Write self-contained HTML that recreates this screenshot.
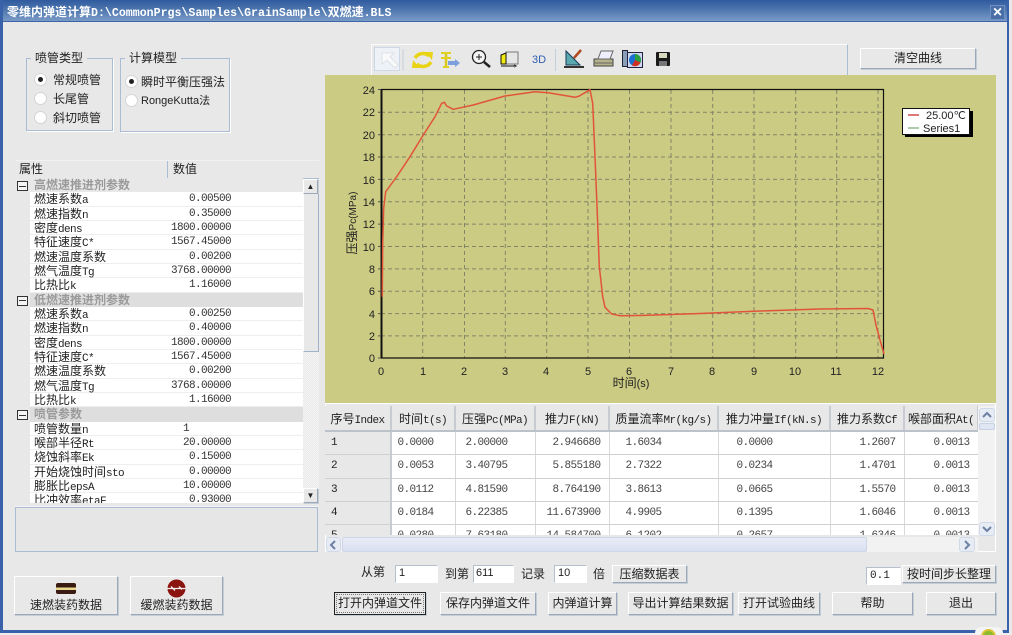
<!DOCTYPE html>
<html><head><meta charset="utf-8">
<style>
html,body{margin:0;padding:0;background:#fff}
#w{position:relative;width:1012px;height:635px;overflow:hidden;background:#e8e8e8;font:12px "Liberation Sans","Noto Sans CJK SC",sans-serif;color:#222;filter:blur(.3px)}
#w div,#w span.a{position:absolute;box-sizing:border-box}
b.m{font:normal 11px "Liberation Mono",monospace;letter-spacing:-.6px}
.t{white-space:nowrap;line-height:16px}
.btn{background:#e8e8e8;border:1px solid;border-color:#fff #9aa8ba #9aa8ba #fff;box-shadow:1px 1px 0 #c4ccd6;text-align:center;white-space:nowrap;color:#222}
.gb{border:1px solid #a9bcd3;box-shadow:1px 1px 0 #fff}
.leg{background:#e8e8e8;padding:0 4px;white-space:nowrap;line-height:14px}
.r{width:13px;height:13px;border-radius:50%;background:#fff;border:1px solid #d4d4d4}
.r.on:after{content:"";position:absolute;left:3px;top:3px;width:5px;height:5px;border-radius:50%;background:#222}
.in{background:#fff;border:1px solid;border-color:#b5c0cc #fff #fff #b5c0cc;font:11px/15px "Liberation Sans",sans-serif;padding-left:3px;color:#222}
#pg{left:15px;top:178px;width:288px;height:325px;overflow:hidden;background:#e8e8e8}
.g,.p{position:relative!important;height:14.33px;line-height:14px;white-space:nowrap}
.g{background:linear-gradient(#dedede,#dedede) 15px 0 no-repeat;color:#9a9a9a;font-weight:bold;padding-left:19px}
.g.f{background:none}
.g:before{content:"";position:absolute;left:2px;top:3px;width:9px;height:8px;border:1px solid #333;background:linear-gradient(#333,#333) center/7px 1px no-repeat #f4f4f4}
.p{margin-left:15px;background:#fff;border-bottom:1px solid #eee;padding-left:4px}
.p i{position:absolute;top:0;left:121px;width:80px;font:normal 11px/14px "Liberation Mono",monospace;letter-spacing:-.6px;text-align:right;color:#333}
#tb{left:325px;top:406px;width:653px;height:129px;overflow:hidden;background:#fff}
table{border-collapse:collapse;table-layout:fixed;width:653px;font:11px "Liberation Mono",monospace;letter-spacing:-.6px;color:#444}
th{height:24px;background:#e8e8e8;font-weight:normal;color:#222;border-right:2px solid #c8ccd2;border-bottom:2px solid #bcc2ca;white-space:nowrap;overflow:hidden;padding:0;text-align:center}
td{height:22.3px;padding:0;text-align:right;border-right:1px solid #d8d8d8;border-bottom:1px solid #d0d0d0}
th span{font:12px "Liberation Sans","Noto Sans CJK SC",sans-serif;letter-spacing:0}
td.h{background:#e8e8e8;text-align:left;padding-left:6px;border-right:2px solid #c8ccd2;color:#222}
</style></head><body><div id="w">

<!-- title bar -->
<div style="left:0;top:0;width:1012px;height:22px;background:linear-gradient(#2f5a9f,#4d76ae 45%,#7a9ac6);border-bottom:1px solid #3d66a8"></div>
<div class="t" style="left:7px;top:4px;color:#fff;font-weight:bold;font-size:12px">零维内弹道计算<b style="font:bold 11.6px 'Liberation Mono',monospace">D:\CommonPrgs\Samples\GrainSample\</b>双燃速<b style="font:bold 11.6px 'Liberation Mono',monospace">.BLS</b></div>
<div style="left:990px;top:5px;width:15px;height:15px;background:#4a6fa8;border:1px solid #6f90c0;color:#fff;font:bold 16px/13px 'Liberation Sans',sans-serif;text-align:center">×</div>
<!-- window frame -->
<div style="left:0;top:0;width:3px;height:633px;background:#3a62aa"></div>
<div style="left:1007px;top:0;width:2px;height:633px;background:#3a62aa"></div>
<div style="left:1009px;top:0;width:3px;height:635px;background:#e9e9e9"></div>
<div style="left:0;top:630px;width:1009px;height:3px;background:#3a62aa"></div>
<div style="left:0;top:633px;width:1012px;height:2px;background:#eee"></div>
<div style="left:975px;top:627px;width:28px;height:8px;background:#f4f4f4;border-radius:6px 6px 0 0"></div>
<div style="left:981px;top:629px;width:15px;height:15px;border-radius:50%;background:#8cbb2c;border:2px solid #d9c437"></div>

<!-- groups -->
<div class="gb" style="left:26px;top:58px;width:87px;height:73px"></div>
<div class="t leg" style="left:31px;top:51px">喷管类型</div>
<div class="r on" style="left:34px;top:73px"></div><div class="t" style="left:53px;top:72px">常规喷管</div>
<div class="r" style="left:34px;top:92px"></div><div class="t" style="left:53px;top:91px">长尾管</div>
<div class="r" style="left:34px;top:111px"></div><div class="t" style="left:53px;top:110px">斜切喷管</div>

<div class="gb" style="left:120px;top:58px;width:110px;height:74px"></div>
<div class="t leg" style="left:125px;top:51px">计算模型</div>
<div class="r on" style="left:125px;top:75px"></div><div class="t" style="left:141px;top:74px">瞬时平衡压强法</div>
<div class="r" style="left:125px;top:94px"></div><div class="t" style="left:141px;top:93px;font-size:11px">RongeKutta法</div>

<!-- property grid -->
<div style="left:15px;top:160px;width:304px;height:19px;background:#e8e8e8;border-top:1px solid #f2f2f2;border-bottom:1px solid #a9bcd3"></div>
<div style="left:167px;top:161px;width:1px;height:17px;background:#a9bcd3"></div>
<div class="t" style="left:19px;top:161px">属性</div>
<div class="t" style="left:173px;top:161px">数值</div>
<div id="pg">
<div class="g f">高燃速推进剂参数</div>
<div class="p">燃速系数<b class="m">a</b><i>0.00500</i></div>
<div class="p">燃速指数<b class="m">n</b><i>0.35000</i></div>
<div class="p">密度<b class="m">dens</b><i>1800.00000</i></div>
<div class="p">特征速度<b class="m">C*</b><i>1567.45000</i></div>
<div class="p">燃速温度系数<i>0.00200</i></div>
<div class="p">燃气温度<b class="m">Tg</b><i>3768.00000</i></div>
<div class="p">比热比<b class="m">k</b><i>1.16000</i></div>
<div class="g">低燃速推进剂参数</div>
<div class="p">燃速系数<b class="m">a</b><i>0.00250</i></div>
<div class="p">燃速指数<b class="m">n</b><i>0.40000</i></div>
<div class="p">密度<b class="m">dens</b><i>1800.00000</i></div>
<div class="p">特征速度<b class="m">C*</b><i>1567.45000</i></div>
<div class="p">燃速温度系数<i>0.00200</i></div>
<div class="p">燃气温度<b class="m">Tg</b><i>3768.00000</i></div>
<div class="p">比热比<b class="m">k</b><i>1.16000</i></div>
<div class="g">喷管参数</div>
<div class="p">喷管数量<b class="m">n</b><i style="text-align:left;left:153px">1</i></div>
<div class="p">喉部半径<b class="m">Rt</b><i>20.00000</i></div>
<div class="p">烧蚀斜率<b class="m">Ek</b><i>0.15000</i></div>
<div class="p">开始烧蚀时间<b class="m">sto</b><i>0.00000</i></div>
<div class="p">膨胀比<b class="m">epsA</b><i>10.00000</i></div>
<div class="p">比冲效率<b class="m">etaF</b><i>0.93000</i></div>
</div>
<!-- grid scrollbar -->
<div style="left:303px;top:179px;width:16px;height:324px;background:repeating-conic-gradient(#e8e8e8 0 25%,#f6f6f6 0 50%) 0 0/2px 2px"></div>
<div class="btn" style="left:303px;top:179px;width:15px;height:15px;font:8px/13px 'Liberation Sans',sans-serif">▲</div>
<div style="left:303px;top:194px;width:16px;height:158px;background:#e8e8e8;border-right:1px solid #9fb2c9;border-bottom:1px solid #9fb2c9;border-left:1px solid #fff"></div>
<div class="btn" style="left:303px;top:488px;width:15px;height:15px;font:8px/13px 'Liberation Sans',sans-serif">▼</div>

<div style="left:15px;top:507px;width:303px;height:45px;background:#e6e6e6;border:1px solid #a9bcd3;box-shadow:0 -1px 0 #f4f4f4"></div>

<!-- left bottom buttons -->
<div class="btn" style="left:14px;top:576px;width:104px;height:39px;padding-top:21px;line-height:14px">速燃装药数据</div>
<svg style="position:absolute;left:55px;top:583px" width="22" height="12"><rect x="1" y="0" width="20" height="11" rx="2" fill="#3a1a12"/><rect x="1" y="4.500" width="20" height="2.500" fill="#e8d890"/></svg>
<div class="btn" style="left:130px;top:576px;width:93px;height:39px;padding-top:21px;line-height:14px">缓燃装药数据</div>
<svg style="position:absolute;left:166px;top:579px" width="21" height="20"><circle cx="10.500" cy="9.500" r="9" fill="#8a1410"/><path d="M1 9.500h19M5 7.500l4 4M13 7.500l3 3" stroke="#eee" stroke-width="1.300" fill="none"/></svg>

<!-- toolbar -->
<div style="left:371px;top:44px;width:477px;height:32px;background:#e8e8e8;border:1px solid;border-color:#fbfbfb #a9bcd3 #a9bcd3 #fbfbfb"></div>
<div style="left:374px;top:47px;width:26px;height:24px;background:#eef1f5;border:1px solid #cdd8e6"></div>
<svg style="position:absolute;left:371px;top:44px" width="320" height="32" fill="none">
<path d="M11 9l12 0-4 4 8 8-3 3-8-8-5 4z" fill="#fafafa" stroke="#dde2e8"/>
<path d="M32 5v22M184.500 5v22" stroke="#c3cedb"/>
<path d="M44 14c3-5 10-6 14-2" stroke="#e8d414" stroke-width="3.500"/><path d="M54 8l8 0-1 8z" fill="#e8d414"/>
<path d="M60 18c-3 5-10 6-14 2" stroke="#e8d414" stroke-width="3.500"/><path d="M49 24l-8 0 1-8z" fill="#e8d414"/>
<path d="M75 8v15" stroke="#d8c820" stroke-width="2.500"/><path d="M70 9h10M70 14h10M72 23h6" stroke="#e0d020" stroke-width="2"/>
<path d="M77 17h7v-2l5 4-5 4v-2h-7z" fill="#7d9fdc"/>
<circle cx="108" cy="13" r="6.500" fill="#f6f6f6" stroke="#222" stroke-width="1.300"/>
<path d="M105 13h6M108 10v6" stroke="#222"/><path d="M113 18l6 5" stroke="#222" stroke-width="2.500"/>
<rect x="135" y="8" width="12" height="12" fill="#e6e6e6" stroke="#777"/>
<path d="M130 11l5-2v11h-5z" fill="#f2ea10" stroke="#111"/><path d="M130 22h13M143 21l2 1-2 1" stroke="#111"/>
<text x="161" y="19" font-family="Liberation Sans,sans-serif" font-size="11" fill="#2f5fb0">3D</text>
<path d="M195 21V7l14 14z" fill="#5aa8b0" stroke="#153a55"/><path d="M193 23h20" stroke="#333" stroke-width="2"/><path d="M203 14l7-8" stroke="#b04a20" stroke-width="2.500"/>
<path d="M223 15h19v7h-19z" fill="#b5b38a" stroke="#444"/><path d="M227 15l3-8h12l-3 8z" fill="#eef" stroke="#666"/><path d="M223 19h19" stroke="#666"/>
<rect x="251.500" y="6.500" width="5" height="16" fill="#8a9eb8" stroke="#223"/>
<rect x="256.500" y="8.500" width="15" height="15" fill="#cfd8ee" stroke="#224"/>
<circle cx="264" cy="16" r="6" fill="#1a6fd0"/><path d="M264 16v-6a6 6 0 0 1 5.500 8.500z" fill="#2aa040"/><path d="M264 16l5.500 2.500a6 6 0 0 1-8.500 3z" fill="#d03020"/>
<rect x="285" y="8" width="14" height="14" rx="1" fill="#1a1a1a"/><rect x="288" y="9" width="8" height="5" fill="#d8d8c0"/><rect x="288" y="17" width="8" height="5" fill="#777"/>
</svg>
<div class="btn" style="left:860px;top:48px;width:116px;height:21px;line-height:19px">清空曲线</div>

<!-- chart -->
<svg style="position:absolute;left:325px;top:75px" width="671" height="328" viewBox="325 75 671 328">
<rect x="325" y="75" width="671" height="328" fill="#cbcb83"/>
<g stroke="#858568" stroke-dasharray="4 3" fill="none">
<path d="M381 112.300H884M381 134.700H884M381 157H884M381 179.400H884M381 201.800H884M381 224.100H884M381 246.500H884M381 268.900H884M381 291.200H884M381 313.600H884M381 335.900H884"/>
<path d="M422.700 90V358M464.500 90V358M505.300 90V358M546.700 90V358M588 90V358M629.500 90V358M671 90V358M712.700 90V358M754 90V358M795.700 90V358M836.700 90V358M878 90V358"/>
</g>
<path d="M381.500 89.500H883.500V358H381.500Z" fill="none" stroke="#111" stroke-width="1.200"/>
<path d="M381.500 89.500V358" stroke="#111" stroke-width="2"/>
<g stroke="#555"><path d="M378 89.500h3M378 112.300h3M378 134.700h3M378 157h3M378 179.400h3M378 201.800h3M378 224.100h3M378 246.500h3M378 268.900h3M378 291.200h3M378 313.600h3M378 335.900h3M378 358h3"/></g>
<path d="M382.300 296.700L382.700 243L383.700 208L385.700 191.700L396.700 176.700L410 156.700L423.300 135L435 116.700L441.700 103.300L444.300 102.300L446.700 106L453.300 109.300L473.300 105L505 96L535 91.700L548.300 92.700L575 97.300L579.300 96L590 89.700L592.700 103.300L595 156.700L597.300 213.300L599.300 266.700L602.700 296.700L605 307.300L611.700 314L620 315.700L640 315.500L700 313.500L760 311L820 309L868 308.500L873 310L876 325L880 340L884 354" fill="none" stroke="#e2543a" stroke-width="1.500" stroke-linejoin="round"/>
<g font-family="Liberation Sans,sans-serif" font-size="11" fill="#222" text-anchor="end">
<text x="375" y="94">24</text><text x="375" y="116">22</text><text x="375" y="139">20</text><text x="375" y="161">18</text><text x="375" y="184">16</text><text x="375" y="206">14</text><text x="375" y="228">12</text><text x="375" y="251">10</text><text x="375" y="273">8</text><text x="375" y="295">6</text><text x="375" y="318">4</text><text x="375" y="340">2</text><text x="375" y="362">0</text>
</g>
<g font-family="Liberation Sans,sans-serif" font-size="11" fill="#222" text-anchor="middle">
<text x="381" y="375">0</text><text x="423" y="375">1</text><text x="464" y="375">2</text><text x="505" y="375">3</text><text x="546" y="375">4</text><text x="588" y="375">5</text><text x="629" y="375">6</text><text x="671" y="375">7</text><text x="712" y="375">8</text><text x="754" y="375">9</text><text x="795" y="375">10</text><text x="836" y="375">11</text><text x="878" y="375">12</text>
</g>
<text x="631" y="387" font-family="Liberation Sans,Noto Sans CJK SC,sans-serif" font-size="11" fill="#222" text-anchor="middle"><tspan font-size="12">时间</tspan>(s)</text>
<text transform="translate(356 223) rotate(-90)" font-family="Liberation Sans,Noto Sans CJK SC,sans-serif" font-size="10" fill="#222" text-anchor="middle"><tspan font-size="12">压强</tspan>Pc(MPa)</text>
<rect x="905" y="111" width="68" height="26" fill="#000"/>
<rect x="902.500" y="108.500" width="67" height="26" fill="#fff" stroke="#111"/>
<path d="M908 115h11" stroke="#c83030" stroke-width="1.300"/><path d="M908 128h11" stroke="#80b080" stroke-width="1.300"/>
<text x="926" y="119" font-family="Liberation Sans,sans-serif" font-size="11" fill="#222">25.00℃</text>
<text x="923" y="132" font-family="Liberation Sans,sans-serif" font-size="11" fill="#222">Series1</text>
</svg>

<!-- data table -->
<div style="left:325px;top:403px;width:671px;height:149px;background:#e8e8e8;border:1px solid #fff"></div>
<div id="tb"><table>
<colgroup><col style="width:66px"><col style="width:64px"><col style="width:80px"><col style="width:74px"><col style="width:109px"><col style="width:112px"><col style="width:74px"><col style="width:74px"></colgroup>
<tr><th><span>序号</span>Index</th><th><span>时间</span>t(s)</th><th><span>压强</span>Pc(MPa)</th><th><span>推力</span>F(kN)</th><th><span>质量流率</span>Mr(kg/s)</th><th><span>推力冲量</span>If(kN.s)</th><th><span>推力系数</span>Cf</th><th><span>喉部面积</span>At(</th></tr>
<tr><td class="h">1</td><td style="padding-right:21px">0.0000</td><td style="padding-right:27px">2.00000</td><td style="padding-right:8px">2.946680</td><td style="padding-right:56px">1.6034</td><td style="padding-right:57px">0.0000</td><td style="padding-right:8px">1.2607</td><td style="padding-right:8px">0.0013</td></tr>
<tr><td class="h">2</td><td style="padding-right:21px">0.0053</td><td style="padding-right:27px">3.40795</td><td style="padding-right:8px">5.855180</td><td style="padding-right:56px">2.7322</td><td style="padding-right:57px">0.0234</td><td style="padding-right:8px">1.4701</td><td style="padding-right:8px">0.0013</td></tr>
<tr><td class="h">3</td><td style="padding-right:21px">0.0112</td><td style="padding-right:27px">4.81590</td><td style="padding-right:8px">8.764190</td><td style="padding-right:56px">3.8613</td><td style="padding-right:57px">0.0665</td><td style="padding-right:8px">1.5570</td><td style="padding-right:8px">0.0013</td></tr>
<tr><td class="h">4</td><td style="padding-right:21px">0.0184</td><td style="padding-right:27px">6.22385</td><td style="padding-right:8px">11.673900</td><td style="padding-right:56px">4.9905</td><td style="padding-right:57px">0.1395</td><td style="padding-right:8px">1.6046</td><td style="padding-right:8px">0.0013</td></tr>
<tr><td class="h">5</td><td style="padding-right:21px">0.0280</td><td style="padding-right:27px">7.63180</td><td style="padding-right:8px">14.584700</td><td style="padding-right:56px">6.1202</td><td style="padding-right:57px">0.2657</td><td style="padding-right:8px">1.6346</td><td style="padding-right:8px">0.0013</td></tr>
</table></div>
<!-- table scrollbars -->
<div style="left:978px;top:406px;width:17px;height:129px;background:#f2f2f2"></div>
<div style="left:979px;top:408px;width:16px;height:14px;background:#e6ebf4;border:1px solid #d0d9e8;border-radius:3px"></div>
<svg style="position:absolute;left:982px;top:411px" width="10" height="7"><path d="M1 6l4-4 4 4" fill="none" stroke="#6d80a5" stroke-width="2"/></svg>
<div style="left:979px;top:423px;width:16px;height:7px;background:#dfe5f2;border:1px solid #c6d1e3;border-radius:2px"></div>
<div style="left:979px;top:522px;width:16px;height:14px;background:#e6ebf4;border:1px solid #d0d9e8;border-radius:3px"></div>
<svg style="position:absolute;left:982px;top:526px" width="10" height="7"><path d="M1 1l4 4 4-4" fill="none" stroke="#6d80a5" stroke-width="2"/></svg>
<div style="left:326px;top:537px;width:652px;height:15px;background:#f2f2f2"></div>
<div style="left:326px;top:537px;width:15px;height:15px;background:#e6ebf4;border:1px solid #d0d9e8;border-radius:3px"></div>
<svg style="position:absolute;left:329px;top:540px" width="8" height="10"><path d="M6 1L2 5l4 4" fill="none" stroke="#6d80a5" stroke-width="2"/></svg>
<div style="left:342px;top:537px;width:525px;height:15px;background:linear-gradient(#e8ecf6,#d8e0f0);border:1px solid #cdd6e6;border-radius:2px"></div>
<div style="left:959px;top:537px;width:16px;height:15px;background:#e6ebf4;border:1px solid #d0d9e8;border-radius:3px"></div>
<svg style="position:absolute;left:963px;top:540px" width="8" height="10"><path d="M2 1l4 4-4 4" fill="none" stroke="#6d80a5" stroke-width="2"/></svg>

<!-- bottom controls -->
<div class="t" style="left:361px;top:564px">从第</div>
<div class="in" style="left:395px;top:565px;width:43px;height:18px">1</div>
<div class="t" style="left:445px;top:566px">到第</div>
<div class="in" style="left:473px;top:565px;width:41px;height:18px;padding-left:2px">611</div>
<div class="t" style="left:521px;top:566px">记录</div>
<div class="in" style="left:554px;top:565px;width:33px;height:18px">10</div>
<div class="t" style="left:593px;top:566px">倍</div>
<div class="btn" style="left:612px;top:565px;width:75px;height:18px;line-height:16px">压缩数据表</div>
<div class="in" style="left:866px;top:567px;width:35px;height:18px;font:11px/17px 'Liberation Mono',monospace">0.1</div>
<div class="btn" style="left:902px;top:565px;width:94px;height:18px;line-height:16px">按时间步长整理</div>
<div class="btn" style="left:334px;top:592px;width:92px;height:23px;line-height:21px;border:1px solid #222;outline:1px dotted #777;outline-offset:-3px">打开内弹道文件</div>
<div class="btn" style="left:440px;top:592px;width:96px;height:23px;line-height:21px">保存内弹道文件</div>
<div class="btn" style="left:548px;top:592px;width:69px;height:23px;line-height:21px">内弹道计算</div>
<div class="btn" style="left:628px;top:592px;width:105px;height:23px;line-height:21px">导出计算结果数据</div>
<div class="btn" style="left:738px;top:592px;width:82px;height:23px;line-height:21px">打开试验曲线</div>
<div class="btn" style="left:832px;top:592px;width:81px;height:23px;line-height:21px">帮助</div>
<div class="btn" style="left:926px;top:592px;width:70px;height:23px;line-height:21px">退出</div>
</div></body></html>
